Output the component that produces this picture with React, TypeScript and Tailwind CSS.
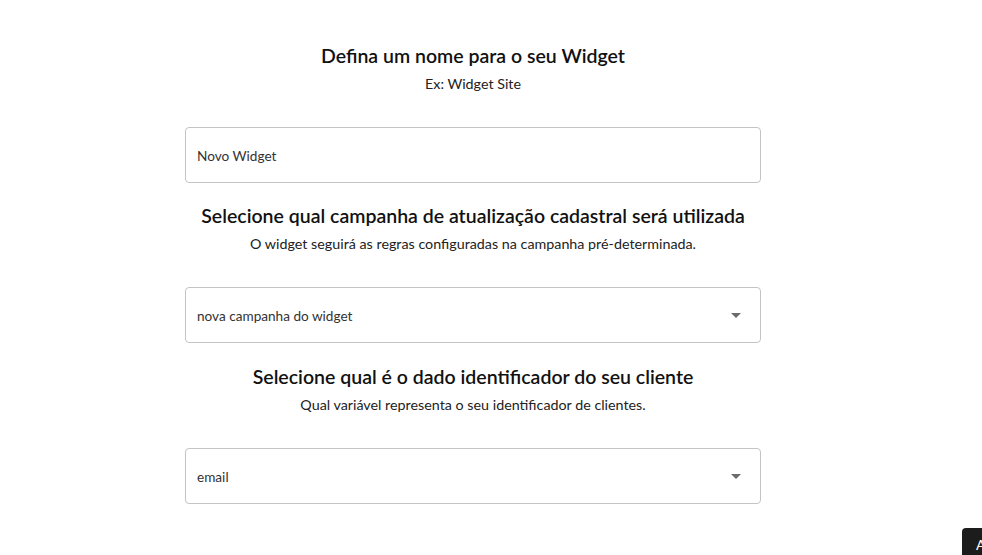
import React from "react";

function Caret() {
  return (
    <svg width="10" height="5" viewBox="0 0 10 5" className="shrink-0">
      <path d="M0 0 L10 0 L5 5 Z" fill="#6b6b6b" />
    </svg>
  );
}

function Field({ value, select }: { value: string; select?: boolean }) {
  return (
    <div className="h-[56px] w-[576px] rounded-[4px] border border-[#c4c4c4] bg-white flex items-center pl-[11px] pr-[19px] justify-between">
      <span className="text-[13.6px] leading-[18px] pt-[2px] text-[#333333]">{value}</span>
      {select && <Caret />}
    </div>
  );
}

function Heading({ title, sub }: { title: string; sub: string }) {
  return (
    <div className="flex flex-col items-center">
      <h2 className="text-[19.5px] leading-[28px] font-semibold text-[#111111]">{title}</h2>
      <p className="mt-[4px] text-[14.3px] leading-[20px] text-[#222222]">{sub}</p>
    </div>
  );
}

export default function App() {
  return (
    <div
      className="relative h-[555px] w-[982px] overflow-hidden bg-white"
      style={{ fontFamily: "Lato, 'Noto Sans', sans-serif" }}
    >
      <div className="ml-[185px] w-[576px] pt-[42px] flex flex-col">
        <Heading title="Defina um nome para o seu Widget" sub="Ex: Widget Site" />
        <div className="mt-[33px]">
          <Field value="Novo Widget" />
        </div>
        <div className="mt-[19px]">
          <Heading
            title="Selecione qual campanha de atualização cadastral será utilizada"
            sub="O widget seguirá as regras configuradas na campanha pré-determinada."
          />
        </div>
        <div className="mt-[33px]">
          <Field value="nova campanha do widget" select />
        </div>
        <div className="mt-[20px]">
          <Heading
            title="Selecione qual é o dado identificador do seu cliente"
            sub="Qual variável representa o seu identificador de clientes."
          />
        </div>
        <div className="mt-[33px]">
          <Field value="email" select />
        </div>
      </div>
      <div className="absolute left-[962px] top-[528px] h-[27px] w-[20px] overflow-hidden rounded-tl-[4px] bg-[#1c1c1c]">
        <span className="absolute left-[14px] top-[6px] whitespace-nowrap text-[14px] text-white">Avançar</span>
      </div>
    </div>
  );
}
